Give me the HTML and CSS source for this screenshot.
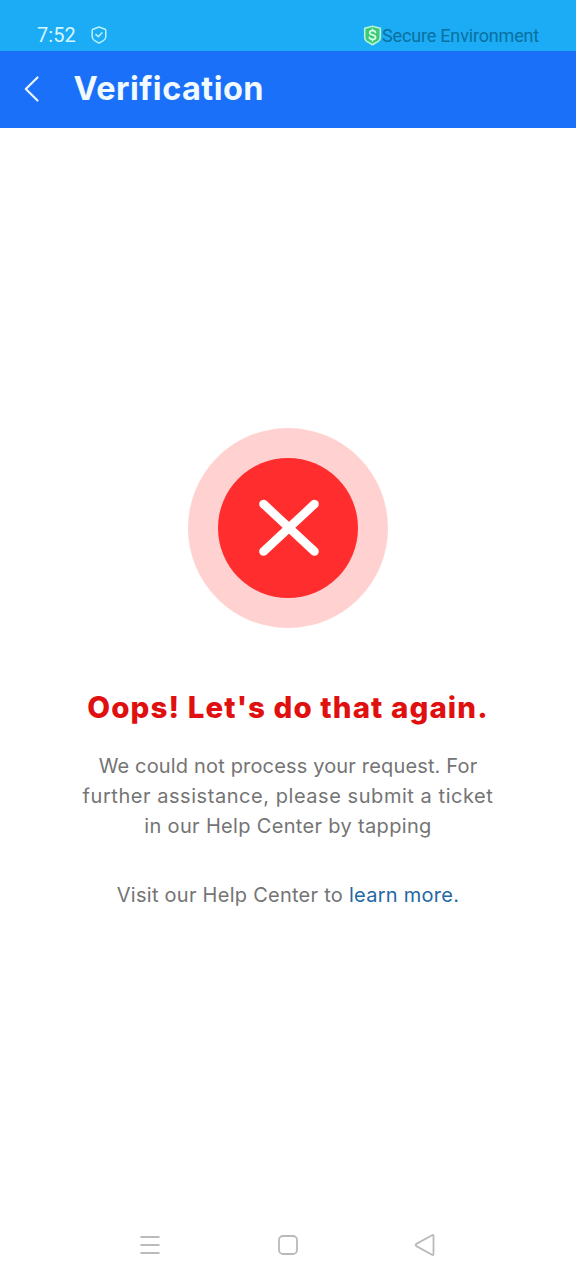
FILE: index.html
```html
<!DOCTYPE html>
<html lang="en">
<head>
<meta charset="utf-8">
<title>Verification</title>
<link rel="stylesheet" href="styles.css">
</head>
<body>
<div class="screen">
  <div class="status">
    <span class="time">7:52</span>
    <svg class="shield" width="16" height="18" viewBox="0 0 16 18"><path d="M8 1 14 3.3Q14.8 3.6 14.8 4.5V10.500Q14.800 13.200 12.300 14.700L8 17.100 3.700 14.700Q1.200 13.200 1.200 10.500V4.500Q1.200 3.600 2 3.300Z"/><path d="m5 8.600 2.300 2.200L11 6.800"/></svg>
    <div class="secure">
      <svg class="badge" width="19" height="21" viewBox="0 0 19 21"><path class="badge-body" d="M9.500 1.300 17.300 3.300V12.500Q17.300 15 15.200 16.400L9.500 19.800 3.800 16.400Q1.700 15 1.700 12.500V3.300Z"/><path class="badge-mark" d="M12.500 7.500Q12.100 5.700 9.500 5.700 6.700 5.700 6.700 7.700 6.700 9.300 9.500 9.900 12.600 10.500 12.600 12.400 12.600 14.300 9.600 14.300 6.700 14.300 6.400 12.300M9.500 4.300V5.700M9.500 14.300V15.800"/></svg>
      <span class="secure-text">Secure Environment</span>
    </div>
  </div>
  <header class="bar">
    <svg class="back" width="18" height="28" viewBox="0 0 18 28"><path d="M14.500 2.500 2.800 14 14.500 25.500"/></svg>
    <h1 class="title">Verification</h1>
  </header>
  <main class="content">
    <svg class="error" width="200" height="200" viewBox="0 0 200 200"><circle class="halo" cx="100" cy="100" r="100"/><circle class="disc" cx="100" cy="100" r="70"/><path class="cross" d="M75.500 76 126.500 123.500M126.500 76 75.500 123.500"/></svg>
    <h2 class="heading">Oops! Let's do that again.</h2>
    <p class="text"><span class="line-first">We could not process your request. For</span><br><span class="line-wide">further assistance, please submit a ticket</span><br><span class="line-last">in our Help Center by tapping</span></p>
    <p class="text visit">Visit our Help Center to <a class="link">learn more.</a></p>
  </main>
  <nav class="nav">
    <svg class="menu" width="24" height="24" viewBox="0 0 24 24"><path d="M2.500 4H21.500M2.500 12H21.500M2.500 20H21.500"/></svg>
    <svg width="24" height="24" viewBox="0 0 24 24"><rect x="3" y="3" width="18" height="18" rx="4"/></svg>
    <svg width="24" height="24" viewBox="0 0 24 24"><path d="M20.500 3.200V20.800Q20.500 22.600 19 21.700L3.400 13.100Q1.800 12 3.400 10.900L19 2.300Q20.500 1.400 20.500 3.200Z"/></svg>
  </nav>
</div>
</body>
</html>
```
FILE: styles.css
```css
body { margin: 0; background: #fff; font-family: Inter, "Liberation Sans", sans-serif; }
svg { display: block; fill: none; stroke-linecap: round; stroke-linejoin: round; flex: none; }
.screen { width: 576px; height: 1280px; display: flex; flex-direction: column; overflow: hidden; }
.status { height: 51px; box-sizing: border-box; padding: 19px 37px 0; display: flex; align-items: center; background: #1cabf5; }
.time { font: 400 20px/32px Roboto, sans-serif; color: #d4f7ff; letter-spacing: .1px; width: 54px; }
.shield { stroke: #b9f3ff; stroke-width: 1.5; }
.secure { margin-left: auto; display: flex; align-items: center; }
.secure-text { font: 400 18px/32px Roboto, sans-serif; color: #08719f; white-space: nowrap; letter-spacing: -.17px; padding-top: 2px; }
.badge-body { fill: #3fc878; stroke: #b4f5d5; stroke-width: 1.6; }
.badge-mark { stroke: #d8ffe6; stroke-width: 1.7; }
.bar { height: 77px; display: flex; align-items: center; padding-left: 22.5px; background: #1b70fa; }
.back { stroke: #e8f7ff; stroke-width: 2.2; margin-bottom: 2px; }
.title { margin: 0 0 2px 33px; font-size: 32.5px; line-height: 40px; font-weight: 700; color: #f0faff; letter-spacing: .45px; }
.content { flex: 1; display: flex; flex-direction: column; align-items: center; padding-top: 300px; }
.halo { fill: #ffd1d1; }
.disc { fill: #ff2d2d; }
.cross { stroke: #fff; stroke-width: 8.6; }
.heading { margin: 59px 0 0; font-size: 29.5px; line-height: 40px; font-weight: 800; color: #e01010; white-space: nowrap; letter-spacing: 1.1px; }
.text { margin: 24px 0 0; font-size: 20px; line-height: 30px; color: #747474; text-align: center; white-space: nowrap; }
.line-first { letter-spacing: .16px; }
.line-wide { letter-spacing: .55px; }
.line-last { letter-spacing: .33px; }
.visit { margin-top: 39px; letter-spacing: .26px; }
.link { color: #2468a4; }
.nav { height: 70px; display: flex; justify-content: space-between; align-items: center; padding: 0 139px 0 138px; stroke: #bababa; stroke-width: 1.8; }
.menu { stroke-linecap: butt; }
```
